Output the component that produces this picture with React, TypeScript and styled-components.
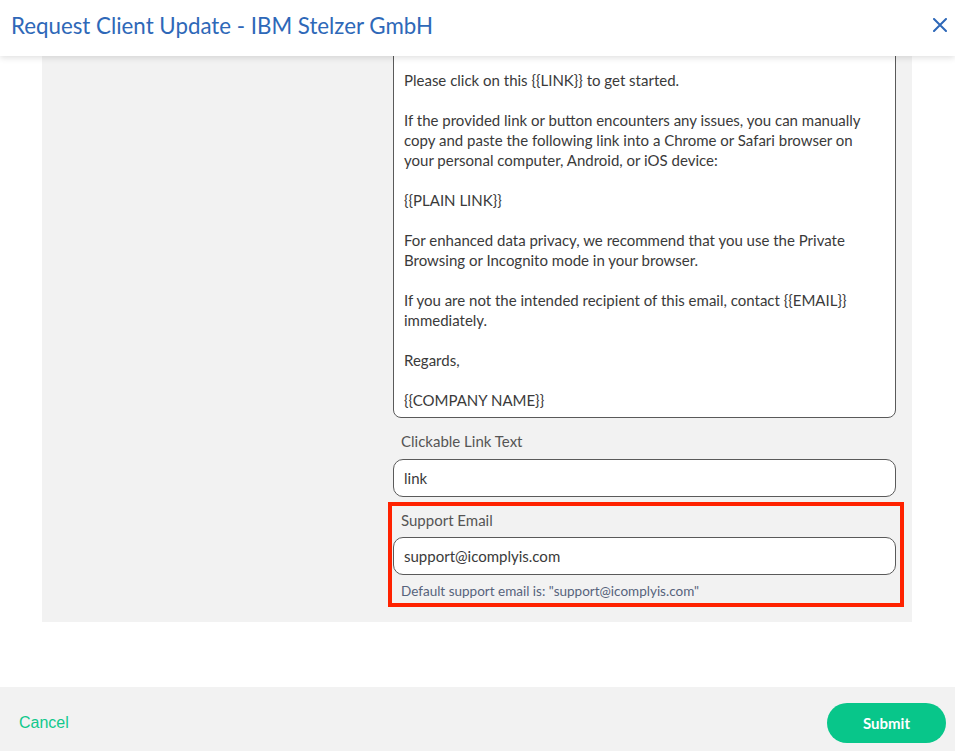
import React, { useLayoutEffect, useRef } from "react";
import styled, { createGlobalStyle } from "styled-components";

const GlobalStyle = createGlobalStyle`
  html, body {
    margin: 0;
    padding: 0;
    background: #ffffff;
    font-family: Lato, "Open Sans", sans-serif;
  }
  * {
    box-sizing: border-box;
  }
`;

const Modal = styled.div`
  width: 100vw;
  height: 100vh;
  display: flex;
  flex-direction: column;
  background: #ffffff;
  overflow: hidden;
`;

const Header = styled.header`
  position: relative;
  z-index: 2;
  height: 56px;
  flex: none;
  display: flex;
  align-items: center;
  justify-content: space-between;
  padding: 0 5px 6px 11px;
  background: #ffffff;
  box-shadow: 0 2px 6px rgba(0, 0, 0, 0.12);
`;

const Title = styled.h1`
  margin: 0;
  font-size: 22.3px;
  font-weight: 400;
  color: #2e68b8;
`;

const CloseButton = styled.button`
  border: none;
  background: none;
  padding: 0;
  width: 20px;
  height: 20px;
  display: flex;
  align-items: center;
  justify-content: center;
  color: #2e68b8;
  cursor: pointer;
`;

const Body = styled.div`
  flex: 1;
  overflow-y: auto;
  scrollbar-width: none;
  padding: 0 43px 65px 42px;
  &::-webkit-scrollbar {
    display: none;
  }
`;

const Panel = styled.section`
  background: #f2f2f2;
  display: grid;
  grid-template-columns: 351px 1fr;
  padding: 20px 16px 15px 0;
`;

const Fields = styled.div`
  grid-column: 2;
  display: flex;
  flex-direction: column;
`;

const MessageBox = styled.div`
  background: #ffffff;
  border: 1px solid #5a5a5a;
  border-radius: 8px;
  padding: 9px 10px 7px;
  font-size: 15px;
  line-height: 20px;
  color: #3a3a3a;
`;

const Para = styled.p`
  margin: 0 0 20px;
  &:last-child {
    margin-bottom: 0;
  }
`;

const Field = styled.div`
  display: flex;
  flex-direction: column;
  margin-top: 13px;
`;

const Highlight = styled.div`
  margin: 5px -8px 0 -5px;
  padding: 4px 4px 0 1px;
  border: 4px solid #ff2200;
  display: flex;
  flex-direction: column;
`;

const Label = styled.label`
  font-size: 15px;
  line-height: 20px;
  color: #555555;
  padding-left: 8px;
  margin-bottom: 8px;
  &.tight {
    margin-bottom: 7px;
  }
`;

const Input = styled.input`
  height: 38px;
  width: 100%;
  border: 1px solid #5a5a5a;
  border-radius: 10px;
  background: #ffffff;
  padding: 0 10px;
  font-family: Lato, "Open Sans", sans-serif;
  font-size: 15px;
  color: #3a3a3a;
  outline: none;
`;

const Hint = styled.div`
  font-size: 13.5px;
  line-height: 16px;
  color: #56637c;
  padding: 8px 0 0 8px;
  margin-bottom: 4px;
`;

const Footer = styled.footer`
  height: 64px;
  flex: none;
  background: #f2f2f2;
  display: flex;
  align-items: center;
  justify-content: space-between;
  padding: 8px 9px 0 19px;
`;

const CancelLink = styled.button`
  border: none;
  background: none;
  padding: 0;
  font-family: "Liberation Sans", Arial, sans-serif;
  font-size: 16px;
  color: #10c88c;
  cursor: pointer;
`;

const SubmitButton = styled.button`
  width: 119px;
  height: 40px;
  border: none;
  border-radius: 20px;
  background: #08c68a;
  color: #ffffff;
  font-family: Lato, "Open Sans", sans-serif;
  font-size: 15px;
  font-weight: 700;
  cursor: pointer;
`;

const paragraphs = [
  "Hello {{CLIENT NAME}},",
  "{{COMPANY NAME}} has requested that you review and update your information.",
  "Please click on this {{LINK}} to get started.",
  "If the provided link or button encounters any issues, you can manually copy and paste the following link into a Chrome or Safari browser on your personal computer, Android, or iOS device:",
  "{{PLAIN LINK}}",
  "For enhanced data privacy, we recommend that you use the Private Browsing or Incognito mode in your browser.",
  "If you are not the intended recipient of this email, contact {{EMAIL}} immediately.",
  "Regards,",
  "{{COMPANY NAME}}",
];

const App: React.FC = () => {
  const bodyRef = useRef<HTMLDivElement>(null);

  useLayoutEffect(() => {
    if (bodyRef.current) {
      bodyRef.current.scrollTop = bodyRef.current.scrollHeight;
    }
  }, []);

  return (
    <>
      <GlobalStyle />
      <Modal>
        <Header>
          <Title>Request Client Update - IBM Stelzer GmbH</Title>
          <CloseButton aria-label="Close">
            <svg width="14" height="14" viewBox="0 0 14 14">
              <path d="M1 1L13 13M13 1L1 13" stroke="currentColor" strokeWidth="2" strokeLinecap="round" />
            </svg>
          </CloseButton>
        </Header>
        <Body ref={bodyRef}>
          <Panel>
            <Fields>
              <MessageBox>
                {paragraphs.map((p, i) => (
                  <Para key={i}>{p}</Para>
                ))}
              </MessageBox>
              <Field>
                <Label>Clickable Link Text</Label>
                <Input defaultValue="link" />
              </Field>
              <Highlight>
                <Label className="tight">Support Email</Label>
                <Input defaultValue="support@icomplyis.com" />
                <Hint>Default support email is: "support@icomplyis.com"</Hint>
              </Highlight>
            </Fields>
          </Panel>
        </Body>
        <Footer>
          <CancelLink>Cancel</CancelLink>
          <SubmitButton>Submit</SubmitButton>
        </Footer>
      </Modal>
    </>
  );
};

export default App;
